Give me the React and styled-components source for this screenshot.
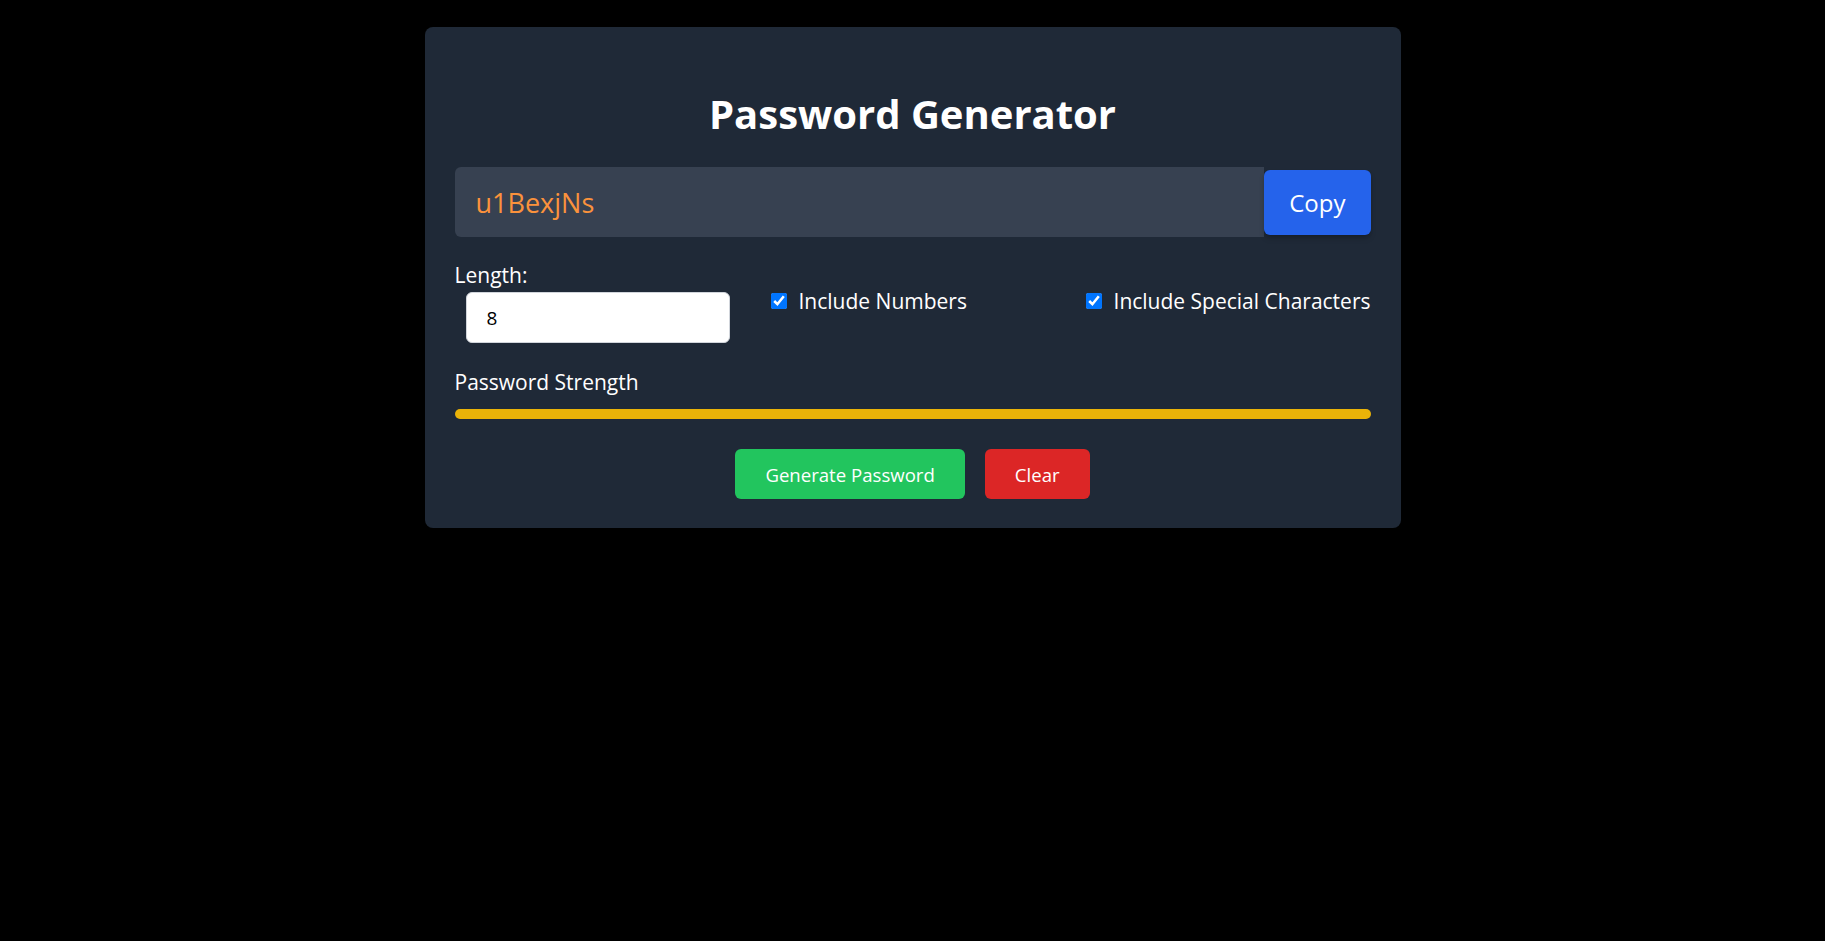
import React, { useState } from "react";
import styled, { createGlobalStyle } from "styled-components";

const GlobalStyle = createGlobalStyle`
  html, body {
    margin: 0;
    padding: 0;
    background: #000;
  }
  body {
    font-family: "Open Sans", "Noto Sans", sans-serif;
    color: #fff;
  }
`;

const Page = styled.div`
  min-height: 100vh;
  display: flex;
  justify-content: center;
  align-items: flex-start;
  padding-top: 27px;
  box-sizing: border-box;
`;

const Card = styled.div`
  width: 976px;
  box-sizing: border-box;
  padding: 30px 30px 29px;
  background-color: #1f2937;
  border-radius: 8px;
  display: flex;
  flex-direction: column;
`;

const Title = styled.h1`
  margin: 33px 0 29px;
  font-size: 40px;
  line-height: 48px;
  font-weight: 700;
  text-align: center;
  color: #fff;
`;

const OutputRow = styled.div`
  display: flex;
  align-items: center;
  height: 70px;
`;

const Output = styled.div`
  flex: 1;
  height: 70px;
  display: flex;
  align-items: center;
  padding-left: 21px;
  box-sizing: border-box;
  background-color: #374151;
  border-radius: 6px 0 0 6px;
  color: #fb923c;
  font-size: 27px;
`;

const Button = styled.button`
  border: none;
  outline: none;
  cursor: pointer;
  font-family: inherit;
  color: #fff;
  border-radius: 6px;
  background-color: ${(p) => p.$bg};
  font-size: ${(p) => p.$size || 18.6}px;
  height: ${(p) => p.$height || 50}px;
  padding: 0 ${(p) => p.$pad || 30}px;
`;

const CopyButton = styled(Button)`
  box-shadow: 0 4px 6px -1px rgba(0, 0, 0, 0.2), 0 2px 4px -2px rgba(0, 0, 0, 0.2);
`;

const Options = styled.div`
  display: flex;
  align-items: center;
  margin-top: 26px;
`;

const LengthGroup = styled.div`
  display: flex;
  flex-direction: column;
`;

const Label = styled.label`
  display: block;
  font-size: 21px;
  line-height: 24px;
  color: #fff;
`;

const NumberInput = styled.input`
  margin: 5px 0 0 11px;
  width: 264px;
  height: 51px;
  box-sizing: border-box;
  padding: 0 20px;
  border: 1px solid #d1d5db;
  border-radius: 6px;
  background: #fff;
  color: #000;
  font-family: inherit;
  font-size: 19px;
  outline: none;
`;

const Check = styled.label`
  display: flex;
  align-items: center;
  gap: 12px;
  font-size: 21px;
  line-height: 24px;
  margin-left: ${(p) => p.$ml || "0"};
  margin-top: -5px;

  input {
    width: 16px;
    height: 16px;
    margin: 0;
    accent-color: #0075ff;
  }
`;

const StrengthLabel = styled(Label)`
  margin-top: 27px;
`;

const StrengthBar = styled.div`
  margin-top: 15px;
  height: 10px;
  border-radius: 9999px;
  background-color: #eab308;
`;

const Actions = styled.div`
  display: flex;
  justify-content: center;
  gap: 20px;
  margin-top: 30px;
`;

const App = () => {
  const [length, setLength] = useState(8);
  const [numbers, setNumbers] = useState(true);
  const [special, setSpecial] = useState(true);

  return (
    <>
      <GlobalStyle />
      <Page>
        <Card>
          <Title>Password Generator</Title>
          <OutputRow>
            <Output>u1BexjNs</Output>
            <CopyButton $bg="#2563eb" $size={24} $height={65} $pad={25}>
              Copy
            </CopyButton>
          </OutputRow>

          <Options>
            <LengthGroup>
              <Label>Length:</Label>
              <NumberInput
                type="text"
                value={length}
                onChange={(e) => setLength(e.target.value)}
              />
            </LengthGroup>
            <Check $ml="41px">
              <input
                type="checkbox"
                checked={numbers}
                onChange={() => setNumbers(!numbers)}
              />
              Include Numbers
            </Check>
            <Check $ml="auto">
              <input
                type="checkbox"
                checked={special}
                onChange={() => setSpecial(!special)}
              />
              Include Special Characters
            </Check>
          </Options>

          <StrengthLabel>Password Strength</StrengthLabel>
          <StrengthBar />

          <Actions>
            <Button $bg="#22c55e">Generate Password</Button>
            <Button $bg="#dc2626">Clear</Button>
          </Actions>
        </Card>
      </Page>
    </>
  );
};

export default App;
